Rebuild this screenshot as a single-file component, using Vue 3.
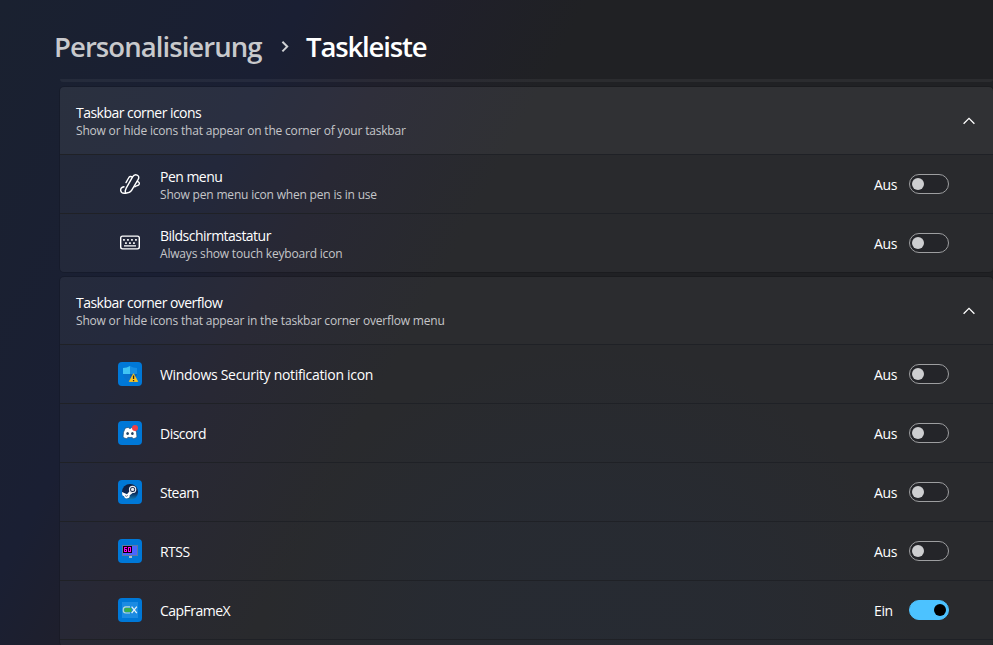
<template>
  <div class="settings-page">
    <header class="breadcrumb">
      <span class="crumb parent">Personalisierung</span>
      <svg class="crumb-arrow" width="10" height="14" viewBox="0 0 10 14">
        <path d="M2.4 1.8 L7.2 6.6 L2.4 11.4" />
      </svg>
      <span class="crumb current">Taskleiste</span>
    </header>

    <main class="content">
      <div class="previous-card"></div>

      <section v-for="group in groups" :key="group.title" class="card" :class="group.name">
        <div class="card-header">
          <div class="labels">
            <span class="title">{{ group.title }}</span>
            <span class="description">{{ group.description }}</span>
          </div>
          <svg class="chevron" width="14" height="10" viewBox="0 0 14 10">
            <path d="M1.6 6.8 L7 1.4 L12.4 6.8" />
          </svg>
        </div>

        <div v-for="item in group.items" :key="item.title" class="row">
          <svg v-if="item.icon === 'pen'" class="icon line-icon" viewBox="0 0 24 24">
            <path d="M7.6 21.2 C6.9 19.4 7.3 17.8 8.2 16.2 L14.6 4.9 C15.6 3.1 17.4 2.4 19.1 3.1 C21 3.9 21.2 5.7 20.2 7.4 L13.6 18.4 C12.3 20.4 10.4 21 7.6 21.2z" />
            <path d="M6 14.8 C3.8 15.2 2.5 16.6 2.7 18.5 C3 20.6 4.8 21.6 7.6 21.2 M14.4 5.1 C12.9 4 11.5 4.4 10.6 6 L8 10.6 M19.2 9.5 C21 9.6 21.9 11.2 21 12.6 C20.2 13.9 18.4 13.2 16.8 14.8" />
          </svg>
          <svg v-else-if="item.icon === 'keyboard'" class="icon line-icon" viewBox="0 0 24 24">
            <rect x="2.7" y="5.1" width="18.6" height="12.8" rx="1.8" />
            <path class="keys" d="M5.1 8h1.7v1.7H5.1z M9.1 8h1.7v1.7H9.1z M13.1 8h1.7v1.7h-1.7z M17.1 8h1.7v1.7h-1.7z M7.1 11.2h1.7v1.7H7.1z M11.1 11.2h1.7v1.7h-1.7z M15.1 11.2h1.7v1.7h-1.7z M6 14.3h12v1.3H6z" />
          </svg>
          <svg v-else-if="item.icon === 'security'" class="icon" viewBox="0 0 24 24">
            <rect width="24" height="24" rx="4" fill="#0078d7" />
            <path d="M5 6 Q9 6 12 4 V12 H5z" fill="#40c4f4" />
            <path d="M12 4 Q15 6 19 6 V12 H12z" fill="#168ee3" />
            <path d="M5 12 H12 V20 Q6 17.5 5 12z" fill="#0872cd" />
            <path d="M12 12 H19 Q18 17.5 12 20z" fill="#0862b5" />
            <path d="M15.5 11.7 L19.7 19.5 H11.3 Z" fill="#ffc41c" stroke="#ffc41c" stroke-width=".8" stroke-linejoin="round" />
            <path d="M14.9 13.4h1.3v3.6h-1.3z M14.9 18h1.3v1.3h-1.3z" fill="#20252b" />
          </svg>
          <svg v-else-if="item.icon === 'discord'" class="icon" viewBox="0 0 24 24">
            <rect width="24" height="24" rx="4" fill="#0078d7" />
            <path d="M7.2 7.2 Q9 6.5 10.3 6.4 L11 7.3 H13 L13.8 6.4 Q15.2 6.5 16.8 7.2 Q19.2 11.2 19 16 Q17.2 17.5 15.1 17.8 L14.1 16.3 Q12 16.7 9.9 16.3 L8.9 17.8 Q6.7 17.5 5 16 Q4.8 11.2 7.2 7.2z" fill="#fff" stroke="#274f74" stroke-width=".7" />
            <ellipse cx="9.6" cy="12.5" rx="1.3" ry="1.5" fill="#244565" />
            <ellipse cx="14.4" cy="12.5" rx="1.3" ry="1.5" fill="#244565" />
            <circle cx="17" cy="7" r="3" fill="#f23f43" />
          </svg>
          <svg v-else-if="item.icon === 'steam'" class="icon" viewBox="0 0 24 24">
            <defs>
              <linearGradient id="steam-fill" x1="0" y1="0" x2="0" y2="1">
                <stop offset="0" stop-color="#101b39" />
                <stop offset=".55" stop-color="#0b2856" />
                <stop offset="1" stop-color="#1482bd" />
              </linearGradient>
            </defs>
            <rect width="24" height="24" rx="4" fill="#0078d7" />
            <circle cx="12" cy="12" r="8" fill="url(#steam-fill)" />
            <path d="M4 12.1 L9 14.2 L12.3 10.3 L16 12.1 L11.7 15.2 A2.9 2.9 0 0 1 6 16.2 L4.3 15.3z" fill="#fff" />
            <circle cx="14.6" cy="9.4" r="3.1" fill="#142344" stroke="#e8ecf2" stroke-width="1.2" />
            <circle cx="14.6" cy="9.4" r="1.6" fill="#e8ecf2" />
            <path d="M7.1 15.6 Q8.8 17.1 9.9 15.4" fill="none" stroke="#355078" stroke-width=".8" />
          </svg>
          <svg v-else-if="item.icon === 'rtss'" class="icon" viewBox="0 0 24 24">
            <rect width="24" height="24" rx="4" fill="#0078d7" />
            <path d="M4 6h16v11H4z" fill="#5c79a3" />
            <path d="M5 7h14v9H5z" fill="#4966ff" />
            <path d="M11 17h3v2h-3z" fill="#aebdc9" />
            <path d="M5 7h9v7H5z" fill="#080008" />
            <!-- pixel style frame counter -->
            <path d="M6 8h3v1H7v1h2v3H6z M7 11v1h1v-1z M10 8h3v5h-3z M11 9v3h1V9z" fill="#f0e" fill-rule="evenodd" />
          </svg>
          <svg v-else class="icon" viewBox="0 0 24 24">
            <rect width="24" height="24" rx="4" fill="#0078d7" />
            <path d="M4 4h16v16H4z" fill="#1c8be2" />
            <path d="M6.5 10h7v4h-7z" fill="#39af4b" />
            <path d="M12 8.9 H7.8 Q5.2 8.9 5.2 12 Q5.2 15 7.8 15 H12" fill="none" stroke="#b9dccf" stroke-width="1.1" />
            <path d="M13.6 8.7 L18.8 15.2 M18.8 8.7 L13.6 15.2" fill="none" stroke="#e4f3fa" stroke-width="1.3" />
          </svg>

          <div class="labels">
            <span class="title" :class="item.icon + '-title'">{{ item.title }}</span>
            <span v-if="item.description" class="description">{{ item.description }}</span>
          </div>
          <span class="state">{{ item.enabled ? 'Ein' : 'Aus' }}</span>
          <button class="toggle" :class="{ on: item.enabled }" :aria-label="item.title" @click="item.enabled = !item.enabled">
            <span class="knob"></span>
          </button>
        </div>
      </section>
    </main>
  </div>
</template>

<script setup>
import { reactive } from 'vue'

const groups = reactive([
  {
    name: 'corner',
    title: 'Taskbar corner icons',
    description: 'Show or hide icons that appear on the corner of your taskbar',
    items: [
      { icon: 'pen', title: 'Pen menu', description: 'Show pen menu icon when pen is in use', enabled: false },
      { icon: 'keyboard', title: 'Bildschirmtastatur', description: 'Always show touch keyboard icon', enabled: false }
    ]
  },
  {
    name: 'overflow',
    title: 'Taskbar corner overflow',
    description: 'Show or hide icons that appear in the taskbar corner overflow menu',
    items: [
      { icon: 'security', title: 'Windows Security notification icon', enabled: false },
      { icon: 'discord', title: 'Discord', enabled: false },
      { icon: 'steam', title: 'Steam', enabled: false },
      { icon: 'rtss', title: 'RTSS', enabled: false },
      { icon: 'capframex', title: 'CapFrameX', enabled: true }
    ]
  }
])
</script>

<style>
body {
  margin: 0;
  overflow: hidden;
  background: #202124;
}
</style>

<style scoped>
.settings-page {
  box-sizing: border-box;
  height: 645px;
  overflow: hidden;
  padding-left: 54px;
  color: #fff;
  font-family: "Segoe UI", "Open Sans", sans-serif;
  background:
    radial-gradient(ellipse 330px 300px at 590px 645px, rgba(29, 34, 43, 0.8), rgba(29, 34, 43, 0.6) 50%, transparent),
    linear-gradient(118deg, #1a2130 0, #1a1f33 270px, #1f1f2b 370px, #202124 520px);
}
.breadcrumb {
  display: flex;
  align-items: center;
  height: 79px;
  padding-top: 14px;
  box-sizing: border-box;
  font-size: 27.5px;
  font-weight: 600;
  line-height: 38px;
  white-space: nowrap;
}
.parent {
  width: 209px;
  color: #c8c9cc;
  letter-spacing: -0.93px;
}
.crumb-arrow {
  margin: 0 16px 0 17px;
  fill: none;
  stroke: #d0d1d4;
  stroke-width: 2;
}
.current {
  letter-spacing: -1.15px;
}
.content {
  margin-left: 6px;
}
.previous-card {
  height: 3px;
  margin-bottom: 5px;
  border-radius: 0 0 4px 4px;
  background: rgba(255, 255, 255, 0.05);
}
.card {
  margin-bottom: 5px;
  border-radius: 4px;
  overflow: hidden;
  box-shadow: 0 0 0 1px rgba(0, 0, 0, 0.13);
  background: rgba(255, 255, 255, 0.045);
}
.card-header {
  display: flex;
  align-items: center;
  justify-content: space-between;
  box-sizing: border-box;
  height: 67px;
  padding: 2px 17px 0 16px;
  background: rgba(255, 255, 255, 0.012);
}
.corner .card-header {
  background: rgba(255, 255, 255, 0.035);
}
.row {
  display: flex;
  align-items: center;
  box-sizing: border-box;
  height: 59px;
  padding: 0 44px 0 58px;
  border-top: 1px solid #1f2126;
}
.overflow {
  padding-bottom: 6px;
}
.overflow .row:last-child {
  height: 60px;
  border-bottom: 1px solid #1f2126;
}
.labels {
  display: flex;
  flex: 1;
  flex-direction: column;
  white-space: nowrap;
}
.card-header .labels {
  padding-top: 1px;
}
.row .labels {
  margin-left: 18px;
  padding-top: 2px;
}
.corner .row .labels {
  padding-top: 4px;
}
.title {
  font-size: 14px;
  line-height: 18px;
  letter-spacing: -0.53px;
}
.security-title {
  letter-spacing: -0.31px;
}
.description {
  color: #c5c6c9;
  font-size: 12px;
  line-height: 18px;
  letter-spacing: -0.19px;
}
.chevron {
  fill: none;
  stroke: #fff;
  stroke-width: 1.3;
}
.icon {
  width: 24px;
  height: 24px;
  flex: none;
}
.line-icon {
  fill: none;
  stroke: #fff;
  stroke-width: 1.4;
  stroke-linecap: round;
  stroke-linejoin: round;
}
.keys {
  fill: #fff;
  stroke: none;
}
.state {
  width: 35px;
  padding-top: 2px;
  font-size: 14px;
  line-height: 18px;
  letter-spacing: -0.4px;
}
.toggle {
  display: flex;
  align-items: center;
  box-sizing: border-box;
  width: 40px;
  height: 20px;
  padding: 0 2px;
  border: 1px solid #9d9ea0;
  border-radius: 10px;
  background: #242529;
}
.knob {
  width: 12px;
  height: 12px;
  border-radius: 50%;
  background: #cdced0;
}
.toggle.on {
  justify-content: flex-end;
  border-color: #4cc2ff;
  background: #4cc2ff;
}
.on .knob {
  background: #000;
}
</style>
